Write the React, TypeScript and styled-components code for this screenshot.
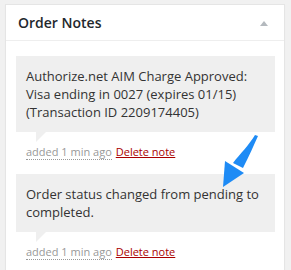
import React from "react";
import styled, { createGlobalStyle } from "styled-components";

const Global = createGlobalStyle`
  html, body { margin: 0; padding: 0; background: #f1f1f1; }
  body { font-family: "Open Sans", "Liberation Sans", sans-serif; color: #444; }
`;

const Page = styled.div`
  position: relative;
  padding: 4px 6px 0 5px;
  height: 266px;
  overflow: hidden;
`;

const Panel = styled.div`
  background: #fff;
  border: 1px solid #e5e5e5;
  box-shadow: 0 1px 1px rgba(0, 0, 0, 0.04);
  width: 278px;
  min-height: 300px;
`;

const Header = styled.div`
  display: flex;
  align-items: center;
  justify-content: space-between;
  height: 35px;
  padding: 0 16px 0 12px;
  border-bottom: 1px solid #eee;
`;

const Title = styled.h2`
  margin: 0;
  font-size: 14px;
  font-weight: 600;
  color: #23282d;
  line-height: 1;
`;

const Toggle = styled.span`
  width: 0;
  height: 0;
  margin-top: 2px;
  border-left: 4px solid transparent;
  border-right: 4px solid transparent;
  border-bottom: 5px solid #b4b9be;
`;

const NoteList = styled.ul`
  list-style: none;
  margin: 0;
  padding: 15px 9px 0 10px;
`;

const Note = styled.li`
  margin: 0;
`;

const NoteContent = styled.div`
  position: relative;
  background: #efefef;
  padding: 11px 10px;
  font-size: 13px;
  line-height: 18px;
  color: #333;
  &:after {
    content: "";
    position: absolute;
    bottom: -10px;
    left: 20px;
    width: 0;
    height: 0;
    border-width: 10px 10px 0 0;
    border-style: solid;
    border-color: #efefef transparent;
  }
`;

const Meta = styled.p`
  margin: 0;
  padding: 11px 10px 13px;
  font-size: 11px;
  line-height: 18px;
  color: #999;
`;

const Ago = styled.abbr`
  text-decoration: none;
  border-bottom: 1px dotted #999;
  cursor: help;
`;

const DeleteLink = styled.a`
  color: #a00;
  text-decoration: underline;
  margin-left: 4px;
`;

const Arrow = styled.svg`
  position: absolute;
  left: 218px;
  top: 130px;
`;

const notes = [
  "Authorize.net AIM Charge Approved: Visa ending in 0027 (expires 01/15) (Transaction ID 2209174405)",
  "Order status changed from pending to completed.",
];

export default function App() {
  return (
    <>
      <Global />
      <Page>
        <Panel>
          <Header>
            <Title>Order Notes</Title>
            <Toggle />
          </Header>
          <NoteList>
            {notes.map((n, i) => (
              <Note key={i}>
                <NoteContent>{n}</NoteContent>
                <Meta>
                  <Ago title="2014">added 1 min ago</Ago>
                  <DeleteLink href="#">Delete note</DeleteLink>
                </Meta>
              </Note>
            ))}
          </NoteList>
        </Panel>
        <Arrow width="44" height="62" viewBox="0 0 44 62">
          <path
            d="M37 5 L40 6 C 36 15, 31 26, 25 38 L 15 33 C 22 24, 31 15, 37 5 Z"
            fill="#1e8bf5"
          />
          <polygon points="7,31 26,43 5,57" fill="#1e8bf5" />
        </Arrow>
      </Page>
    </>
  );
}
